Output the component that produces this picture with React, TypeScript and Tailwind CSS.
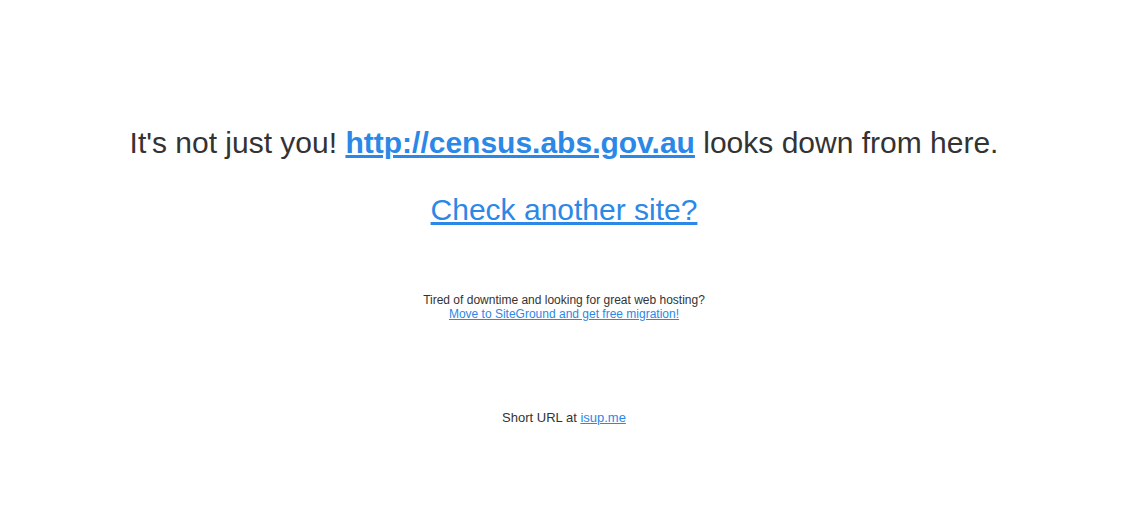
import React from 'react';

const App = () => {
    return (
        <div className="w-[1140px] h-[506px] bg-white font-['Liberation_Sans',Arial,sans-serif] text-[#333] text-center pr-[12px]">
            <div className="pt-[126px]">
                <h1 className="text-[30px] leading-[34px]">
                    It's not just you!{' '}
                    <a href="#" className="font-bold text-[#2b88e6] underline">http://census.abs.gov.au</a>
                    {' '}looks down from here.
                </h1>
                <p className="mt-[33px] text-[30px] leading-[34px]">
                    <a href="#" className="text-[#2b88e6] underline">Check another site?</a>
                </p>

                {/* hosting ad */}
                <div className="mt-[66px] text-[12px] leading-[14px]">
                    <div>Tired of downtime and looking for great web hosting?</div>
                    <a href="#" className="text-[#2b88e6] underline">Move to SiteGround and get free migration!</a>
                </div>

                <p className="mt-[89px] text-[13px] leading-[16px]">
                    Short URL at <a href="#" className="text-[#2b88e6] underline">isup.me</a>
                </p>
            </div>
        </div>
    );
};

export default App;
